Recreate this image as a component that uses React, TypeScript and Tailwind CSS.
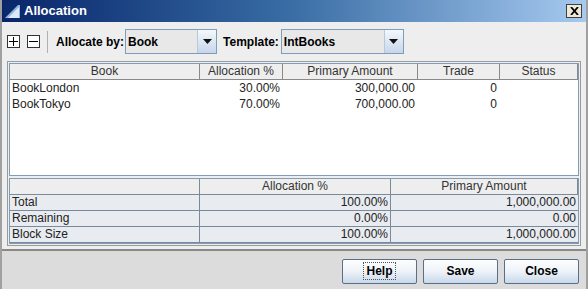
import React from "react";

const font = { fontFamily: '"Liberation Sans", Arial, sans-serif' };

const rows = [
  { book: "BookLondon", pct: "30.00%", amt: "300,000.00", trade: "0" },
  { book: "BookTokyo", pct: "70.00%", amt: "700,000.00", trade: "0" },
];

const summary = [
  { label: "Total", pct: "100.00%", amt: "1,000,000.00" },
  { label: "Remaining", pct: "0.00%", amt: "0.00" },
  { label: "Block Size", pct: "100.00%", amt: "1,000,000.00" },
];

function Combo({ value, width }: { value: string; width: string }) {
  return (
    <div className={`flex h-[25px] border border-[#7f9db9] bg-[#e8e8e8] ${width}`}>
      <div className="flex-1 flex items-center pl-[2px] text-[12px] font-bold text-black">{value}</div>
      <div className="w-[19px] flex items-center justify-center border-l border-[#b9c9dc] bg-gradient-to-b from-[#f4f8fc] to-[#c6d6ea]">
        <svg width="9" height="5" viewBox="0 0 9 5">
          <path d="M0 0h9L4.5 5z" fill="#111" />
        </svg>
      </div>
    </div>
  );
}

function Btn({ label, focus }: { label: string; focus?: boolean }) {
  return (
    <button className="w-[75px] h-[25px] rounded-[2px] border border-[#5a6f86] bg-gradient-to-b from-[#fdfdfd] via-[#eef3f9] to-[#c9d8ea] text-[12px] font-bold text-black flex items-center justify-center">
      <span className={focus ? "border border-dotted border-[#555] px-[2px] leading-[16px]" : "leading-[16px]"}>{label}</span>
    </button>
  );
}

export default function App() {
  return (
    <div style={font} className="w-[588px] h-[289px] bg-[#eeeeee] flex flex-col border-l-[2px] border-r-[2px] border-[#a0a0a0] overflow-hidden">
      {/* title bar */}
      <div className="h-[22px] flex items-center bg-gradient-to-r from-[#0a246a] via-[#3a6ea5] to-[#a6caf0] px-[2px] shrink-0">
        <svg width="17" height="16" viewBox="0 0 17 16" className="mr-[3px]">
          <rect x="0" y="0" width="17" height="16" fill="#0b2a6e" />
          <path d="M1 15 L14 2 L16 2 L16 15 Z" fill="#8fb4e0" />
          <path d="M4 15 L15 4 L15 15 Z" fill="#dfe9f6" />
        </svg>
        <span className="text-white font-bold text-[13px]">Allocation</span>
        <div className="ml-auto mr-[2px] w-[16px] h-[14px] bg-[#ece9d8] border border-[#404040] flex items-center justify-center">
          <svg width="9" height="8" viewBox="0 0 9 8">
            <path d="M1 0 L8 8 M8 0 L1 8" stroke="#000" strokeWidth="1.8" />
          </svg>
        </div>
      </div>

      {/* toolbar */}
      <div className="h-[39px] flex items-center pl-[5px] shrink-0">
        <div className="w-[13px] h-[13px] border border-[#333] bg-white flex items-center justify-center">
          <svg width="9" height="9" viewBox="0 0 9 9"><path d="M4.5 0v9M0 4.5h9" stroke="#000" /></svg>
        </div>
        <div className="ml-[7px] w-[13px] h-[13px] border border-[#333] bg-white flex items-center justify-center">
          <svg width="9" height="9" viewBox="0 0 9 9"><path d="M0 4.5h9" stroke="#000" /></svg>
        </div>
        <div className="ml-[7px] w-[1px] h-[22px] bg-[#b0b0b0]" />
        <span className="ml-[8px] text-[12px] font-bold text-black">Allocate by:</span>
        <div className="ml-[1px]"><Combo value="Book" width="w-[92px]" /></div>
        <span className="ml-[6px] text-[12px] font-bold text-black">Template:</span>
        <div className="ml-[2px]"><Combo value="IntBooks" width="w-[123px]" /></div>
      </div>

      {/* tables */}
      <div className="mx-[5px] border border-[#9a9a9a] p-[1px] flex flex-col shrink-0">
        <div className="h-[113px] bg-white border border-[#7f9db9] text-[12px] text-[#222]">
          <div className="grid grid-cols-[190px_83px_135px_82px_1fr] h-[16px] bg-[#eeeeee]">
            {["Book", "Allocation %", "Primary Amount", "Trade", "Status"].map((h) => (
              <div key={h} className="border-r border-b border-[#8a8a8a] text-center leading-[15px] text-[#333]">{h}</div>
            ))}
          </div>
          {rows.map((r) => (
            <div key={r.book} className="grid grid-cols-[190px_83px_135px_82px_1fr] h-[16px] leading-[16px]">
              <div className="pl-[2px]">{r.book}</div>
              <div className="text-right pr-[3px]">{r.pct}</div>
              <div className="text-right pr-[3px]">{r.amt}</div>
              <div className="text-right pr-[3px]">{r.trade}</div>
              <div />
            </div>
          ))}
        </div>
        <div className="mt-[2px] border border-[#7f9db9] bg-[#eeeeee] text-[12px] text-[#222]">
          <div className="grid grid-cols-[190px_191px_1fr] h-[16px]">
            {["", "Allocation %", "Primary Amount"].map((h, i) => (
              <div key={i} className="border-r border-b border-[#7a8a99] text-center leading-[15px] text-[#333]">{h}</div>
            ))}
          </div>
          {summary.map((s) => (
            <div key={s.label} className="grid grid-cols-[190px_191px_1fr] h-[16px] bg-[#e8ebef]">
              <div className="border-r border-b border-[#7a8a99] pl-[2px] leading-[15px]">{s.label}</div>
              <div className="border-r border-b border-[#7a8a99] text-right pr-[2px] leading-[15px]">{s.pct}</div>
              <div className="border-b border-[#7a8a99] text-right pr-[2px] leading-[15px]">{s.amt}</div>
            </div>
          ))}
        </div>
      </div>

      {/* button bar */}
      <div className="flex-1 mt-[3px] border-t-[2px] border-[#888] bg-[#dcdcdc] flex items-center justify-end gap-[6px] pr-[7px] pt-[2px]">
        <Btn label="Help" focus />
        <Btn label="Save" />
        <Btn label="Close" />
      </div>
    </div>
  );
}
